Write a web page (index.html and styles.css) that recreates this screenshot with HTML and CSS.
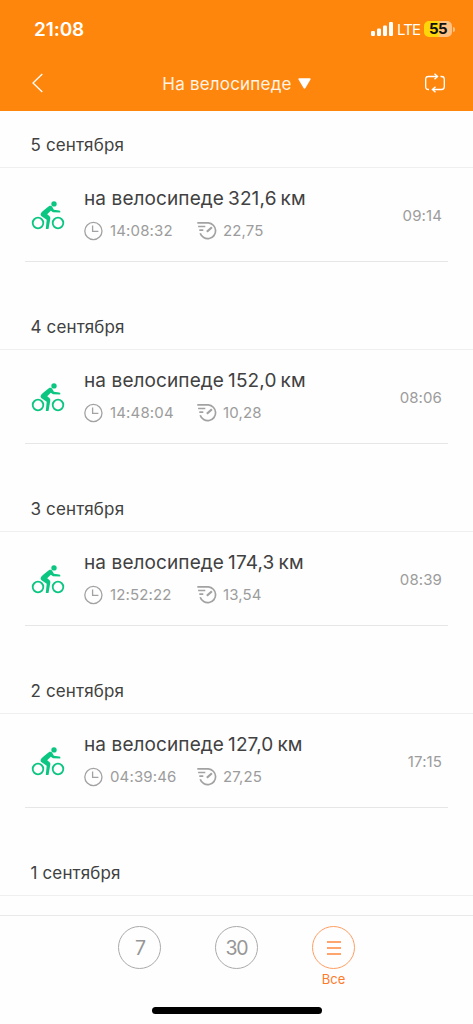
FILE: index.html
```html
<!DOCTYPE html>
<html lang="ru">
<head>
<meta charset="utf-8">
<title>На велосипеде</title>
<link rel="stylesheet" href="styles.css">
</head>
<body>
<svg class="sprite" aria-hidden="true">
  <symbol id="bike" viewBox="0 0 34 30">
    <g fill="none" stroke="#0bc681" stroke-width="1.800"><circle cx="7" cy="23" r="5.300"/><circle cx="27" cy="23" r="5.300"/></g>
    <circle cx="23" cy="3.900" r="2.700" fill="#0bc681"/>
    <path fill="#0bc681" d="M18.500 5.800Q20.400 5.200 21.300 6.900L22.900 9.800L28.200 10.500Q29.900 10.700 29.200 12.400L22 12.200L19.800 10.700L16.200 14.200L18.600 16.200Q19.600 17.200 19.300 18.800L17.500 29H14.800L15.700 19.700L10.200 15.900Q9.100 14.900 9.900 13.200Q11 11.500 18.500 5.800Z"/>
  </symbol>
  <symbol id="clock" viewBox="0 0 20 20">
    <g fill="none" stroke="#a2a2a2" stroke-width="1.300"><circle cx="10.400" cy="10" r="8.600"/><path d="M9.600 4.600V10.400H15.400"/></g>
  </symbol>
  <symbol id="speed" viewBox="0 0 20 20">
    <g fill="none" stroke="#a2a2a2" stroke-width="1.700"><path d="M.3 1.900H11.300A7.900 7.900 0 1 1 3.200 12.300M1.100 5.500H8.300M2.300 9.100H6.300"/><path stroke-width="2.200" d="M9.900 10.800L14.900 6.200"/></g>
  </symbol>
</svg>
<header class="top">
  <div class="status">
    <span class="status-time">21:08</span>
    <div class="status-right">
      <svg class="signal" width="22" height="14" viewBox="0 0 22 14" fill="#fff"><rect y="9" width="4" height="5" rx="1.200"/><rect x="6" y="6.500" width="4" height="7.500" rx="1.200"/><rect x="12" y="3.500" width="4" height="10.500" rx="1.200"/><rect x="18" width="4" height="14" rx="1.200"/></svg>
      <span class="lte">LTE</span>
      <span class="battery">55</span><span class="battery-tip"></span>
    </div>
  </div>
  <nav class="nav">
    <svg class="back" width="12" height="20" viewBox="0 0 12 20"><path d="M10.300 1L1 10L10.300 19" fill="none" stroke="#fff" stroke-width="1.300"/></svg>
    <div class="nav-title"><span>На велосипеде</span><svg width="13" height="12" viewBox="0 0 13 12"><path d="M1 .2H12Q13 .4 12.500 1.400L7.300 10.300Q6.500 11.200 5.700 10.300L.5 1.400Q0 .4 1 .2Z" fill="#fff"/></svg></div>
    <svg class="loop" width="22" height="20" viewBox="0 0 22 20"><g fill="none" stroke="#fff" stroke-width="1.300"><path d="M5 16.500H4.500Q1.700 16.500 1.700 13.700V6.300Q1.700 3.500 4.500 3.500H13.500M10.500.8L13.600 3.500L10.500 6.200M16.500 3.500H17.500Q20.300 3.500 20.300 6.300V13.700Q20.300 16.500 17.500 16.500H8.500M11.500 13.800L8.400 16.500L11.500 19.200"/></g></svg>
  </nav>
</header>
<main class="list">
  <section class="day">
    <h2 class="date">5 сентября</h2>
    <article class="ride">
      <svg class="bike"><use href="#bike"/></svg>
      <div class="info">
        <div class="name"><span class="kind">на велосипеде</span><span class="distance">321,6 км</span></div>
        <div class="stats"><svg class="icon"><use href="#clock"/></svg><span class="duration">14:08:32</span><svg class="icon"><use href="#speed"/></svg><span class="pace">22,75</span></div>
      </div>
      <time class="start">09:14</time>
    </article>
  </section>
  <section class="day">
    <h2 class="date">4 сентября</h2>
    <article class="ride">
      <svg class="bike"><use href="#bike"/></svg>
      <div class="info">
        <div class="name"><span class="kind">на велосипеде</span><span class="distance">152,0 км</span></div>
        <div class="stats"><svg class="icon"><use href="#clock"/></svg><span class="duration">14:48:04</span><svg class="icon"><use href="#speed"/></svg><span class="pace">10,28</span></div>
      </div>
      <time class="start">08:06</time>
    </article>
  </section>
  <section class="day">
    <h2 class="date">3 сентября</h2>
    <article class="ride">
      <svg class="bike"><use href="#bike"/></svg>
      <div class="info">
        <div class="name"><span class="kind">на велосипеде</span><span class="distance">174,3 км</span></div>
        <div class="stats"><svg class="icon"><use href="#clock"/></svg><span class="duration">12:52:22</span><svg class="icon"><use href="#speed"/></svg><span class="pace">13,54</span></div>
      </div>
      <time class="start">08:39</time>
    </article>
  </section>
  <section class="day">
    <h2 class="date">2 сентября</h2>
    <article class="ride">
      <svg class="bike"><use href="#bike"/></svg>
      <div class="info">
        <div class="name"><span class="kind">на велосипеде</span><span class="distance">127,0 км</span></div>
        <div class="stats"><svg class="icon"><use href="#clock"/></svg><span class="duration">04:39:46</span><svg class="icon"><use href="#speed"/></svg><span class="pace">27,25</span></div>
      </div>
      <time class="start">17:15</time>
    </article>
  </section>
  <section class="day">
    <h2 class="date">1 сентября</h2>
  </section>
</main>
<footer class="tabs">
  <div class="tab-row">
    <div class="tab"><span class="ring">7</span></div>
    <div class="tab"><span class="ring wide">30</span></div>
    <div class="tab active"><span class="ring"><svg width="14" height="14" viewBox="0 0 14 14"><path d="M0 1H14M0 7H14M0 13H14" stroke="#ff873e" stroke-width="1.500"/></svg></span><span class="tab-label">Все</span></div>
  </div>
  <div class="home"></div>
</footer>
</body>
</html>
```

FILE: styles.css
```css
* { box-sizing: border-box; }
body {
  margin: 0;
  width: 473px;
  height: 1024px;
  display: flex;
  flex-direction: column;
  overflow: hidden;
  background: #fefefe;
  font-family: Inter, "Liberation Sans", sans-serif;
  color: #414141;
}
svg { flex: none; display: block; }
.sprite { position: absolute; width: 0; height: 0; }
.top { height: 111px; flex: none; background: #ff860d; color: #fff; }
.status { height: 58px; display: flex; justify-content: space-between; padding: 0 18px 0 34px; align-items: center; }
.status-time { font-size: 19px; font-weight: 600; line-height: 24px; letter-spacing: -0.1px; padding-top: 1px; }
.status-right { display: flex; align-items: center; }
.lte { font-size: 15px; line-height: 20px; margin-left: 4px; width: 22px; letter-spacing: -0.9px; padding-top: 1px; }
.battery {
  width: 28px; height: 16px; margin-left: 5px; border-radius: 5px;
  background: linear-gradient(90deg, #ffd60a 55%, #ffc184 55%);
  color: #111; font-size: 15px; font-weight: 700; line-height: 16px; text-align: center; letter-spacing: -0.5px;
}
.battery-tip { width: 2px; height: 5px; margin-left: 1px; border-radius: 0 2px 2px 0; background: #ffc184; }
.nav { height: 53px; display: flex; align-items: center; justify-content: space-between; padding: 0 27px 3px 32px; }
.nav-title { display: flex; align-items: center; gap: 6px; padding: 1px 0 0 5px; font-size: 17px; line-height: 24px; letter-spacing: 0.2px; color: #fff3e6; }
.list { height: 804px; flex: none; overflow: hidden; }
.day { height: 182px; }
.date { margin: 0; height: 57px; padding: 22px 0 0 30.5px; border-bottom: 1px solid #efefef; font-size: 17px; line-height: 24px; font-weight: 400; letter-spacing: 0.15px; }
.ride { height: 94px; margin: 0 25px; display: flex; align-items: flex-start; border-bottom: 1px solid #e6e6e6; }
.bike { width: 34px; height: 30px; margin: 32px 0 0 6px; }
.info { margin: 17px 0 0 18px; flex: 1; }
.name { display: flex; padding-left: 1px; font-size: 19px; line-height: 28px; letter-spacing: 0.1px; white-space: nowrap; }
.kind { width: 144px; }
.distance { word-spacing: -1.5px; letter-spacing: 0.15px; }
.stats { display: flex; align-items: center; height: 20px; margin-top: 8px; font-size: 15px; line-height: 20px; letter-spacing: 0.15px; color: #9c9c9c; }
.icon { width: 20px; height: 20px; }
.duration { width: 81px; margin-left: 7px; margin-right: 6px; }
.pace { margin-left: 6px; }
.start { margin: 38px 6px 0 0; font-size: 15px; line-height: 20px; letter-spacing: 0.1px; color: #9c9c9c; }
.tabs { height: 109px; flex: none; border-top: 1px solid #e9e9e9; background: #fefefe; }
.tab-row { display: flex; justify-content: center; gap: 54px; height: 91px; padding-top: 10px; }
.tab { width: 43px; display: flex; flex-direction: column; align-items: center; }
.ring { width: 43px; height: 43px; border: 1px solid #aaa; border-radius: 50%; display: flex; align-items: center; justify-content: center; font-size: 19.500px; color: #969696; }
.tab:first-child .ring { padding-left: 2px; }
.wide { letter-spacing: -1.2px; }
.active .ring { border-color: #ff9e63; }
.tab-label { margin-top: 2px; font-size: 13px; line-height: 16px; color: #ff7b2c; }
.home { width: 170px; height: 7px; margin: 0 auto; border-radius: 4px; background: #000; }
```
